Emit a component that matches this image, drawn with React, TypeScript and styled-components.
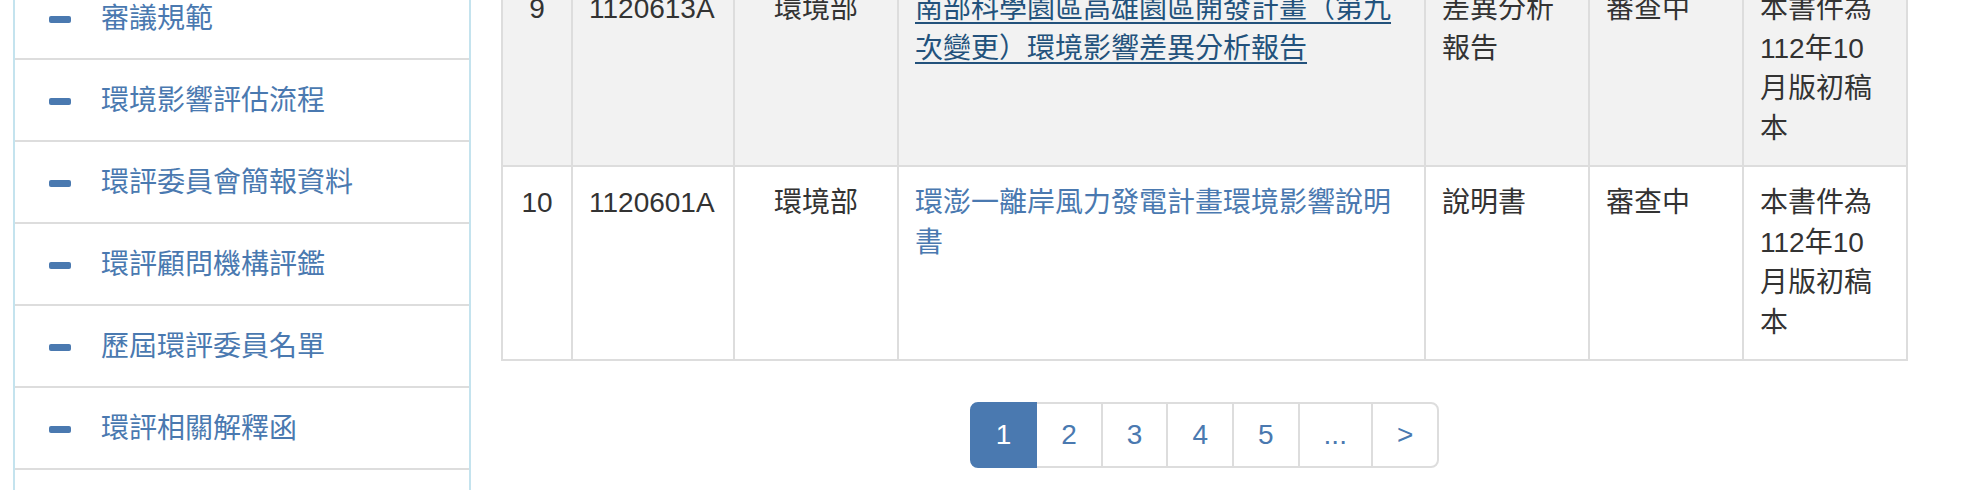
import React from "react";
import styled, { createGlobalStyle } from "styled-components";

const BLUE = "#4a79b0";

const GlobalStyle = createGlobalStyle`
  html, body {
    margin: 0;
    padding: 0;
    overflow: hidden;
    background: #ffffff;
  }
  body {
    font-family: "Liberation Sans", "Noto Sans CJK TC", sans-serif;
    font-size: 28px;
    line-height: 40px;
    color: #333333;
  }
  * { box-sizing: border-box; }
`;

const Page = styled.div`
  display: flex;
  align-items: flex-start;
  gap: 30px;
  padding-left: 13px;
`;

const Sidebar = styled.ul`
  list-style: none;
  margin: -24px 0 0;
  padding: 0;
  width: 458px;
  flex: none;
  border-left: 2px solid #c4e3ee;
  border-right: 2px solid #c4e3ee;
`;

const NavItem = styled.li`
  display: flex;
  align-items: center;
  border-top: 2px solid #dddddd;
  padding: 21px 0 19px 34px;
`;

const Dash = styled.span`
  display: inline-block;
  flex: none;
  width: 22px;
  height: 7px;
  border-radius: 2px;
  background: ${BLUE};
  margin-right: 30px;
`;

const NavLink = styled.a`
  color: ${BLUE};
  text-decoration: none;
`;

const Main = styled.div`
  flex: none;
  width: 1407px;
  margin-top: -29px;
  display: flex;
  flex-direction: column;
  align-items: center;
`;

const Table = styled.table`
  width: 1407px;
  table-layout: fixed;
  border-collapse: collapse;
`;

const Row = styled.tr<{ $striped?: boolean }>`
  background: ${(p) => (p.$striped ? "#f2f2f2" : "#ffffff")};
`;

const Cell = styled.td<{ $center?: boolean }>`
  border: 2px solid #dddddd;
  padding: 16px;
  vertical-align: top;
  text-align: ${(p) => (p.$center ? "center" : "left")};
`;

const CaseLink = styled.a<{ $hover?: boolean }>`
  color: ${(p) => (p.$hover ? "#23527c" : BLUE)};
  text-decoration: ${(p) => (p.$hover ? "underline" : "none")};
  text-decoration-thickness: 2px;
  text-underline-offset: 4px;
`;

const Pager = styled.ul`
  display: flex;
  list-style: none;
  margin: 41px 0 0;
  padding: 0;
`;

const PageItem = styled.li<{ $active?: boolean; $first?: boolean; $last?: boolean }>`
  margin-left: ${(p) => (p.$first ? "0" : "-2px")};
  position: relative;
  z-index: ${(p) => (p.$active ? 2 : 1)};
  padding: 11px 24px;
  border: 2px solid ${(p) => (p.$active ? BLUE : "#dddddd")};
  background: ${(p) => (p.$active ? BLUE : "#ffffff")};
  color: ${(p) => (p.$active ? "#ffffff" : BLUE)};
  border-radius: ${(p) => (p.$first ? "8px 0 0 8px" : p.$last ? "0 8px 8px 0" : "0")};
  line-height: 40px;
  cursor: pointer;
`;

const navItems = [
  "審議規範",
  "環境影響評估流程",
  "環評委員會簡報資料",
  "環評顧問機構評鑑",
  "歷屆環評委員名單",
  "環評相關解釋函",
  "環評書件查詢",
];

type CaseRow = {
  no: string;
  code: string;
  agency: string;
  title: string;
  kind: string;
  status: string;
  note: string;
  hover?: boolean;
};

const rows: CaseRow[] = [
  {
    no: "9",
    code: "1120613A",
    agency: "環境部",
    title: "南部科學園區高雄園區開發計畫（第九次變更）環境影響差異分析報告",
    kind: "差異分析報告",
    status: "審查中",
    note: "本書件為112年10月版初稿本",
    hover: true,
  },
  {
    no: "10",
    code: "1120601A",
    agency: "環境部",
    title: "環澎一離岸風力發電計畫環境影響說明書",
    kind: "說明書",
    status: "審查中",
    note: "本書件為112年10月版初稿本",
  },
];

const pages = ["1", "2", "3", "4", "5", "...", ">"];

export default function App() {
  return (
    <>
      <GlobalStyle />
      <Page>
        <Sidebar>
          {navItems.map((t) => (
            <NavItem key={t}>
              <Dash />
              <NavLink href="#">{t}</NavLink>
            </NavItem>
          ))}
        </Sidebar>
        <Main>
          <Table>
            <colgroup>
              <col style={{ width: 70 }} />
              <col style={{ width: 162 }} />
              <col style={{ width: 164 }} />
              <col style={{ width: 527 }} />
              <col style={{ width: 164 }} />
              <col style={{ width: 154 }} />
              <col style={{ width: 164 }} />
            </colgroup>
            <tbody>
              {rows.map((r, i) => (
                <Row key={r.no} $striped={i % 2 === 0}>
                  <Cell $center>{r.no}</Cell>
                  <Cell>{r.code}</Cell>
                  <Cell $center>{r.agency}</Cell>
                  <Cell>
                    <CaseLink href="#" $hover={r.hover}>
                      {r.title}
                    </CaseLink>
                  </Cell>
                  <Cell>{r.kind}</Cell>
                  <Cell>{r.status}</Cell>
                  <Cell>{r.note}</Cell>
                </Row>
              ))}
            </tbody>
          </Table>
          <Pager>
            {pages.map((p, i) => (
              <PageItem
                key={p}
                $active={i === 0}
                $first={i === 0}
                $last={i === pages.length - 1}
              >
                {p}
              </PageItem>
            ))}
          </Pager>
        </Main>
      </Page>
    </>
  );
}
